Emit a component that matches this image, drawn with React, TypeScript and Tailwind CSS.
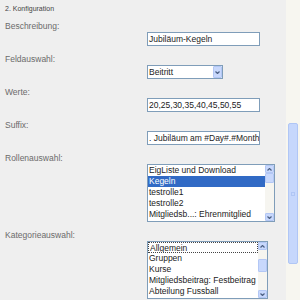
import React from 'react';

const labelCls = 'w-[142px] shrink-0 text-[8.5px] leading-[10px] text-[#6b6b6b]';
const fieldText = 'text-[8.5px] text-[#222]';

function UpArrow() {
  return (
    <svg width="5" height="3" viewBox="0 0 5 3" className="block">
      <path d="M0.5 2.5 L2.5 0.5 L4.5 2.5" fill="none" stroke="#4d6185" strokeWidth="1.2" />
    </svg>
  );
}

function DownArrow() {
  return (
    <svg width="5" height="3" viewBox="0 0 5 3" className="block">
      <path d="M0.5 0.5 L2.5 2.5 L4.5 0.5" fill="none" stroke="#4d6185" strokeWidth="1.2" />
    </svg>
  );
}

function ListScrollbar({ thumbTop, thumbHeight }: { thumbTop: number; thumbHeight: number }) {
  return (
    <div className="w-[9px] shrink-0 flex flex-col bg-[#f6f5f0]">
      <div className="h-[8px] flex items-center justify-center bg-[#c8d8fc] border border-[#b3c7f5] rounded-[1px]">
        <UpArrow />
      </div>
      <div className="flex-1 flex flex-col">
        <div style={{ height: thumbTop }} />
        <div
          className="bg-[#c8d8fc] border border-[#b3c7f5] rounded-[1px]"
          style={{ height: thumbHeight }}
        />
      </div>
      <div className="h-[8px] flex items-center justify-center bg-[#c8d8fc] border border-[#b3c7f5] rounded-[1px]">
        <DownArrow />
      </div>
    </div>
  );
}

type Option = { text: string; selected?: boolean; focused?: boolean };

function ListBox({
  width,
  options,
  thumbTop,
  thumbHeight,
}: {
  width: string;
  options: Option[];
  thumbTop: number;
  thumbHeight: number;
}) {
  return (
    <div className={`${width} h-[58px] flex border border-[#7f9db9] bg-white`}>
      <div className="flex-1 overflow-hidden">
        {options.map((o) => (
          <div
            key={o.text}
            className={`h-[11px] leading-[10px] px-[1px] whitespace-nowrap overflow-hidden ${fieldText} ${
              o.selected ? 'bg-[#316ac5] !text-white' : ''
            } ${o.focused ? 'border border-dotted border-[#444] leading-[9px] px-0' : ''}`}
          >
            {o.text}
          </div>
        ))}
      </div>
      <ListScrollbar thumbTop={thumbTop} thumbHeight={thumbHeight} />
    </div>
  );
}

function TextInput({ value }: { value: string }) {
  return (
    <div
      className={`w-[113px] h-[14px] border border-[#7f9db9] bg-white px-[1px] leading-[12px] whitespace-nowrap overflow-hidden ${fieldText}`}
    >
      {value}
    </div>
  );
}

function Row({ label, children }: { label: string; children: React.ReactNode }) {
  return (
    <div className="flex">
      <div className={labelCls}>{label}</div>
      <div className="mt-[11px]">{children}</div>
    </div>
  );
}

export default function App() {
  return (
    <div className="w-[300px] h-[300px] overflow-hidden flex bg-[#efefef] font-['Liberation_Sans',Arial,sans-serif]">
      <div className="flex-1 overflow-hidden pl-[5px] pt-[4px]">
        <div className="text-[7px] leading-[9px] text-[#444] mb-[8px]">2. Konfiguration</div>

        <div className="flex flex-col gap-[8px]">
          <Row label="Beschreibung:">
            <TextInput value="Jubiläum-Kegeln" />
          </Row>

          <Row label="Feldauswahl:">
            <div className="w-[76px] h-[14px] flex items-center border border-[#7f9db9] bg-white">
              <span className={`flex-1 px-[1px] leading-[12px] ${fieldText}`}>Beitritt</span>
              <div className="w-[9px] h-[12px] flex items-center justify-center bg-[#c8d8fc] border border-[#b3c7f5] rounded-[1px]">
                <DownArrow />
              </div>
            </div>
          </Row>

          <Row label="Werte:">
            <TextInput value="20,25,30,35,40,45,50,55" />
          </Row>

          <Row label="Suffix:">
            <TextInput value=". Jubiläum am #Day#.#Month#.#Year#" />
          </Row>

          <Row label="Rollenauswahl:">
            <ListBox
              width="w-[128px]"
              thumbTop={0}
              thumbHeight={10}
              options={[
                { text: 'EigListe und Download' },
                { text: 'Kegeln', selected: true },
                { text: 'testrolle1' },
                { text: 'testrolle2' },
                { text: 'Mitgliedsb...: Ehrenmitglied' },
              ]}
            />
          </Row>

          <Row label="Kategorieauswahl:">
            <ListBox
              width="w-[121px]"
              thumbTop={9}
              thumbHeight={13}
              options={[
                { text: 'Allgemein', focused: true },
                { text: 'Gruppen' },
                { text: 'Kurse' },
                { text: 'Mitgliedsbeitrag: Festbeitrag' },
                { text: 'Abteilung Fussball' },
              ]}
            />
          </Row>
        </div>
      </div>

      {/* page scrollbar */}
      <div className="w-[14px] shrink-0 bg-[#f7f6f0] pt-[123px] pl-[2px]">
        <div className="w-[10px] h-[141px] flex items-center justify-center bg-[#c6d7fc] border border-[#b0c6f5] rounded-[2px]">
          <div className="w-[4px] h-[4px] border border-[#b0c6f5]" />
        </div>
      </div>
    </div>
  );
}
